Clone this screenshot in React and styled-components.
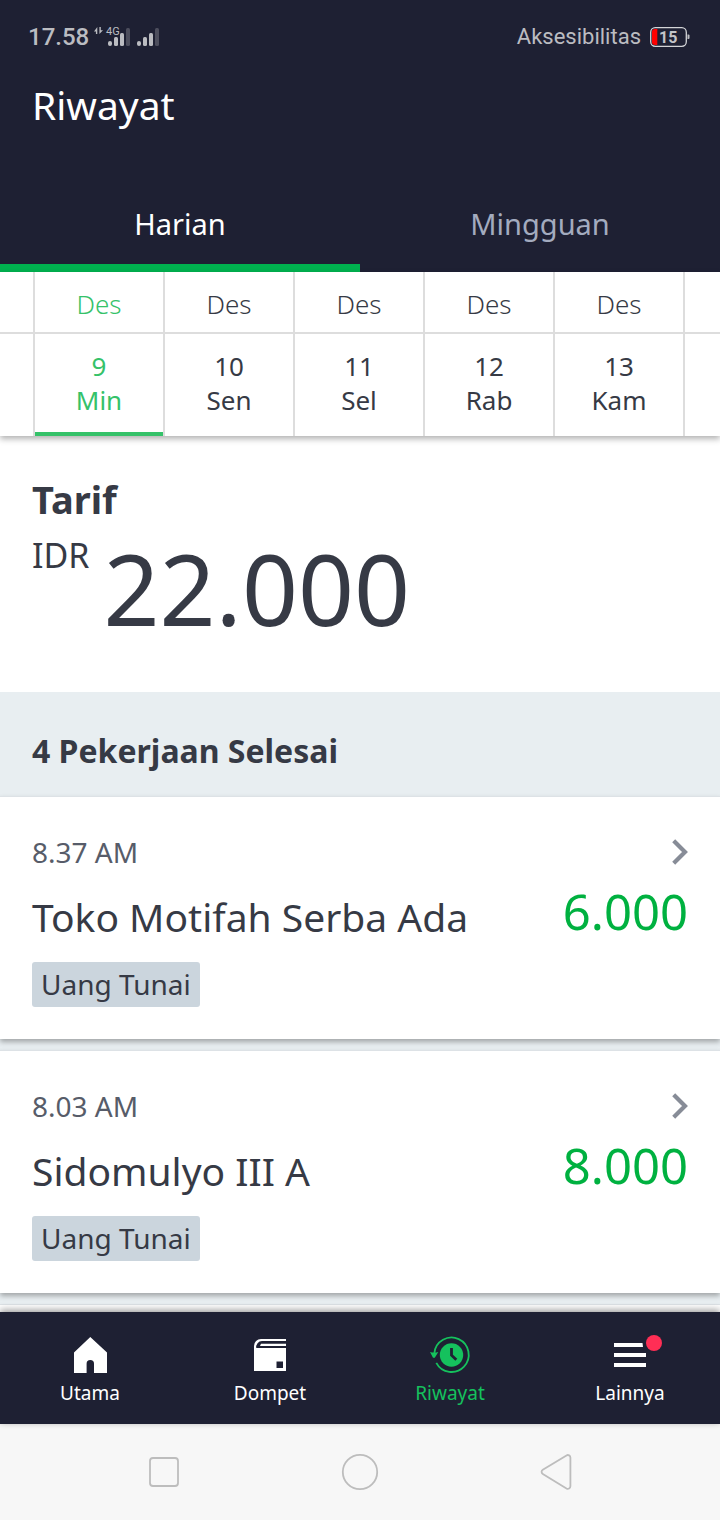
import React, { useState } from "react";
import styled, { createGlobalStyle } from "styled-components";

const navy = "#1e2033";
const ink = "#363a45";
const line = "#dddddd";
const green = "#00b140";

const GlobalStyle = createGlobalStyle`
  * { box-sizing: border-box; }
  body {
    margin: 0;
    background: #fff;
    color: ${ink};
    font-family: "Noto Sans", sans-serif;
  }
  button {
    margin: 0;
    padding: 0;
    border: 0;
    background: none;
    color: inherit;
    font: inherit;
    cursor: pointer;
  }
  a { color: inherit; text-decoration: none; }
  h1, h2, p { margin: 0; }
  svg { display: block; overflow: visible; }
`;

const Page = styled.div`
  min-height: 100vh;
  display: flex;
  flex-direction: column;
`;

const Header = styled.header`
  background: ${navy};
  color: #fff;
`;

const StatusBar = styled.div`
  display: flex;
  justify-content: space-between;
  align-items: center;
  padding: 21px 29px 19px 28px;
  color: #bbbcc1;
  font-family: Roboto, sans-serif;
`;

const StatusGroup = styled.div`
  display: flex;
  align-items: center;
  gap: ${(p) => p.$gap}px;
`;

const Clock = styled.span`
  font-size: 24px;
  line-height: 32px;
  font-weight: 500;
`;

const Carrier = styled.span`
  font-size: 22px;
  line-height: 32px;
`;

const Title = styled.h1`
  padding: 9px 32px 47px;
  font-size: 39px;
  line-height: 48px;
  font-weight: 400;
`;

const Tabs = styled.div`
  display: flex;
`;

const Tab = styled.button`
  flex: 1;
  && {
    padding: 28px 0 20px;
    border-bottom: 8px solid ${(p) => (p.$active ? "#00b14f" : "transparent")};
    color: ${(p) => (p.$active ? "#fff" : "#a3abbf")};
    font-size: 29px;
    line-height: 40px;
  }
`;

const DateStrip = styled.div`
  display: grid;
  grid-template-columns: 35px repeat(5, 1fr) 35px;
  position: relative;
  background: #fff;
  box-shadow: 0 3px 6px rgba(0, 0, 0, 0.3);
`;

const DateCell = styled.button`
  && {
    display: flex;
    flex-direction: column;
    border-right: ${(p) => (p.$last ? 0 : 2)}px solid ${line};
    color: ${(p) => (p.$active ? "#35c269" : ink)};
    font-size: 26px;
    line-height: 34px;
  }
`;

const Month = styled.span`
  width: 100%;
  height: 62px;
  padding-top: 15px;
  border-bottom: 2px solid ${line};
  font-weight: 300;
`;

const Day = styled.span`
  width: 100%;
  height: 102px;
  padding-top: 15px;
  border-bottom: 4px solid ${(p) => (p.$active ? "#35c269" : "transparent")};
`;

const DayPart = styled.span`
  display: block;
`;

const Fare = styled.section`
  padding: 39px 32px 51px;
`;

const FareTitle = styled.h2`
  font-size: 38px;
  line-height: 48px;
  font-weight: 700;
`;

const FareRow = styled.div`
  display: flex;
  align-items: flex-start;
  gap: 14px;
  margin-top: 12px;
`;

const Currency = styled.span`
  font-size: 34px;
  line-height: 40px;
`;

const Total = styled.span`
  font-size: 98px;
  line-height: 106px;
`;

const Jobs = styled.main`
  flex: 1;
  display: flex;
  flex-direction: column;
  gap: 11px;
  background: #e8eef1;
`;

const JobsTitle = styled.h2`
  padding: 35px 32px 21px;
  margin-bottom: -11px;
  font-size: 32px;
  line-height: 48px;
  font-weight: 700;
`;

const Card = styled.a`
  display: block;
  padding: 35px 32px 32px;
  border-top: 1px solid #dde2e6;
  background: #fff;
  box-shadow: 0 3px 5px rgba(0, 0, 0, 0.3);
`;

const NextCard = styled.div`
  flex: 1;
  min-height: 8px;
  border-top: 1px solid #dde2e6;
  background: #fff;
`;

const CardRow = styled.div`
  display: flex;
  justify-content: space-between;
  align-items: ${(p) => p.$align};
`;

const Time = styled.span`
  color: #575c69;
  font-size: 28px;
  line-height: 40px;
`;

const Place = styled.span`
  font-size: 39px;
  line-height: 48px;
`;

const Price = styled.span`
  margin-top: 9px;
  color: ${green};
  font-size: 49px;
  line-height: 60px;
`;

const Chip = styled.span`
  display: inline-block;
  margin-top: 21px;
  padding: 0 9px;
  border-radius: 3px;
  background: #cbd5dd;
  font-size: 28px;
  line-height: 45px;
  vertical-align: top;
`;

const NavBar = styled.nav`
  display: flex;
  position: relative;
  padding: 19px 0;
  background: ${navy};
  color: #fff;
  box-shadow: 0 -2px 7px rgba(0, 0, 0, 0.4);
`;

const NavItem = styled.a`
  flex: 1;
  display: flex;
  flex-direction: column;
  align-items: center;
  gap: 2px;
  color: ${(p) => (p.$active ? "#15c15d" : "#fff")};
  font-size: 19px;
  line-height: 24px;
`;

const SystemBar = styled.footer`
  display: flex;
  justify-content: space-between;
  padding: 24px 140px;
  background: #f7f7f7;
`;

const Svg48 = ({ children, ...rest }) => (
  <svg width="48" height="48" viewBox="0 0 48 48" aria-hidden="true" {...rest}>
    {children}
  </svg>
);

const SignalIcons = () => (
  <svg width="66" height="20" viewBox="0 0 66 20" aria-hidden="true" fill="#bbbcc1">
    <path d="M3.300 0v7H1.900V4.500H0L3.300 0zM5.400 0v7L9 3.200H6.800V0z" />
    <text x="12" y="8" fontSize="11" fontFamily="Roboto, sans-serif">4G</text>
    {[14, 43].map((x) => (
      <g key={x}>
        <rect x={x} y="14" width="4" height="5" rx="2" />
        <rect x={x + 6} y="10" width="4" height="9" rx="1.5" />
        <rect x={x + 12} y="6" width="4" height="13" rx="1.5" />
        <rect x={x + 18} y="1" width="4" height="18" rx="1.5" fill="#4d4e5d" />
      </g>
    ))}
  </svg>
);

const Battery = () => (
  <svg width="41" height="20" viewBox="0 0 41 20" role="img" aria-label="15%">
    <rect x="0.7" y="0.7" width="35.6" height="18.6" rx="4.5" fill="none" stroke="#d3d4d7" strokeWidth="1.3" />
    <path d="M7.3 2v16H5a3 3 0 0 1-3-3V5a3 3 0 0 1 3-3z" fill="#ff0000" />
    <path d="M37.5 7.5h1a1 1 0 0 1 1 1v2.500a1 1 0 0 1-1 1h-1z" fill="#bbbcc1" />
    <text x="9" y="16" fontSize="16" fontWeight="700" fontFamily="Roboto, sans-serif" fill="#c3c4c8">15</text>
  </svg>
);

const Chevron = () => (
  <svg width="16" height="26" viewBox="0 0 16 26" aria-hidden="true">
    <path d="M1.700 1.700 13 13 1.700 24.300" fill="none" stroke="#878c97" strokeWidth="4.200" />
  </svg>
);

const HomeIcon = () => (
  <Svg48 fill="currentColor">
    <path d="M24.300 6 41 21.500V42H28v-9.300a3.700 3.700 0 0 0-7.400 0V42H8V21.500z" />
  </Svg48>
);

const WalletIcon = () => (
  <Svg48 fill="currentColor">
    <path fillRule="evenodd" d="M8 40V15a7 7 0 0 1 7-7h25v2H16a6 6 0 0 0-5.700 7H40v23zM30.500 30.500V37H37v-6.500z" />
    <path d="M15 12.800h25v2.200H14z" />
  </Svg48>
);

const HistoryIcon = () => (
  <Svg48>
    <path d="M8.400 22A17.200 17.200 0 1 1 10.300 31.800" fill="none" stroke="currentColor" strokeWidth="1.800" />
    <path d="M4 21q4 1.200 8.300 0L8.800 26.700H7z" fill="currentColor" />
    <circle cx="25.500" cy="24" r="11.700" fill="currentColor" />
    <path d="M25.500 17v7.200l4.800 4.600" fill="none" stroke={navy} strokeWidth="2.800" />
  </Svg48>
);

const MenuIcon = () => (
  <Svg48 fill="currentColor">
    <path d="M8 12h28.500l.5 4H8zM8 22h32v4H8zM8 32h32v4H8z" />
    <circle cx="48" cy="12" r="8" fill="#ff2e55" />
  </Svg48>
);

const SystemIcon = ({ children }) => (
  <Svg48 fill="none" stroke="#bdbdbd" strokeWidth="1.800" strokeLinejoin="round">
    {children}
  </Svg48>
);

const days = [
  ["9", "Min"],
  ["10", "Sen"],
  ["11", "Sel"],
  ["12", "Rab"],
  ["13", "Kam"],
];

const jobs = [
  { time: "8.37 AM", place: "Toko Motifah Serba Ada", price: "6.000", pay: "Uang Tunai" },
  { time: "8.03 AM", place: "Sidomulyo III A", price: "8.000", pay: "Uang Tunai" },
];

const navItems = [
  { label: "Utama", Icon: HomeIcon },
  { label: "Dompet", Icon: WalletIcon },
  { label: "Riwayat", Icon: HistoryIcon },
  { label: "Lainnya", Icon: MenuIcon },
];

export default function App() {
  const [tab, setTab] = useState("Harian");
  const [day, setDay] = useState("9");

  return (
    <Page>
      <GlobalStyle />
      <Header>
        <StatusBar>
          <StatusGroup $gap={5}>
            <Clock>17.58</Clock>
            <SignalIcons />
          </StatusGroup>
          <StatusGroup $gap={9}>
            <Carrier>Aksesibilitas</Carrier>
            <Battery />
          </StatusGroup>
        </StatusBar>
        <Title>Riwayat</Title>
        <Tabs role="tablist">
          {["Harian", "Mingguan"].map((name) => (
            <Tab
              key={name}
              role="tab"
              aria-selected={tab === name}
              $active={tab === name}
              onClick={() => setTab(name)}
            >
              {name}
            </Tab>
          ))}
        </Tabs>
      </Header>

      <DateStrip>
        <DateCell aria-label="Sebelumnya">
          <Month />
          <Day />
        </DateCell>
        {days.map(([date, name]) => (
          <DateCell key={date} $active={day === date} onClick={() => setDay(date)}>
            <Month>Des</Month>
            <Day $active={day === date}>
              <DayPart>{date}</DayPart>
              <DayPart>{name}</DayPart>
            </Day>
          </DateCell>
        ))}
        <DateCell $last aria-label="Berikutnya">
          <Month />
          <Day />
        </DateCell>
      </DateStrip>

      <Fare>
        <FareTitle>Tarif</FareTitle>
        <FareRow>
          <Currency>IDR</Currency>
          <Total>22.000</Total>
        </FareRow>
      </Fare>

      <Jobs>
        <JobsTitle>4 Pekerjaan Selesai</JobsTitle>
        {jobs.map((job) => (
          <Card key={job.time} href="#">
            <CardRow $align="center">
              <Time>{job.time}</Time>
              <Chevron />
            </CardRow>
            <CardRow $align="flex-end">
              <Place>{job.place}</Place>
              <Price>{job.price}</Price>
            </CardRow>
            <Chip>{job.pay}</Chip>
          </Card>
        ))}
        <NextCard />
      </Jobs>

      <NavBar>
        {navItems.map(({ label, Icon }) => (
          <NavItem key={label} href="#" $active={label === "Riwayat"}>
            <Icon />
            {label}
          </NavItem>
        ))}
      </NavBar>

      <SystemBar>
        <button aria-label="Aplikasi terbaru">
          <SystemIcon>
            <rect x="10" y="10" width="28" height="28" rx="3" />
          </SystemIcon>
        </button>
        <button aria-label="Beranda">
          <SystemIcon>
            <circle cx="24" cy="24" r="17.200" />
          </SystemIcon>
        </button>
        <button aria-label="Kembali">
          <SystemIcon>
            <path d="M10.800 21.700 34.500 7.400a2.600 2.600 0 0 1 3.900 2.200v28.700a2.600 2.600 0 0 1-3.900 2.200L10.800 26a2.500 2.500 0 0 1 0-4.300z" />
          </SystemIcon>
        </button>
      </SystemBar>
    </Page>
  );
}
